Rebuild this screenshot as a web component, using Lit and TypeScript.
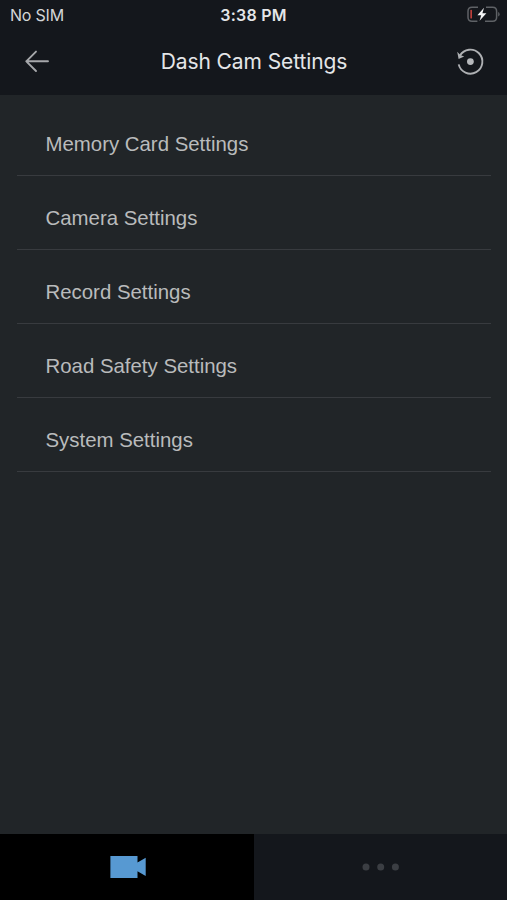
import { LitElement, html, css } from "lit";
import { customElement } from "lit/decorators.js";

interface Row {
  label: string;
}

const ROWS: Row[] = [
  { label: "Memory Card Settings" },
  { label: "Camera Settings" },
  { label: "Record Settings" },
  { label: "Road Safety Settings" },
  { label: "System Settings" },
];

@customElement("status-bar")
class StatusBar extends LitElement {
  static styles = css`
    :host {
      display: grid;
      grid-template-columns: 1fr auto 1fr;
      align-items: center;
      height: 30px;
      padding: 0 7px 0 10px;
      box-sizing: border-box;
      font-family: Inter, sans-serif;
      font-size: 16px;
      line-height: 30px;
      color: #d3d5d7;
    }
    .carrier {
      letter-spacing: -0.2px;
    }
    .time {
      font-weight: 600;
      font-size: 16px;
      letter-spacing: 0.25px;
      margin-right: 3px;
      color: #e4e6e8;
    }
    .battery {
      justify-self: end;
      display: block;
    }
  `;
  render() {
    return html`
      <span class="carrier">No SIM</span>
      <span class="time">3:38 PM</span>
      <svg class="battery" width="33" height="18" viewBox="0 0 33 18" fill="none">
        <path d="M11 1.2H5Q1 1.2 1 5.2V11.3Q1 15.3 5 15.3H10.4M19 1.2H25.6Q29.6 1.2 29.6 5.2V11.3Q29.6 15.3 25.6 15.3H18" stroke="#5f6266" stroke-width="1.5"/>
        <path d="M31.2 6Q32.6 6.6 32.6 8.2T31.2 10.6Z" fill="#5f6266"/>
        <rect x="3.4" y="3.8" width="1.5" height="8.8" rx="0.7" fill="#d0443f"/>
        <path d="M17 1.8L10.4 9.2H14.2L12.6 14.8L19.4 7.2H15.4Z" fill="#f4f5f6"/>
      </svg>
    `;
  }
}

@customElement("nav-header")
class NavHeader extends LitElement {
  static styles = css`
    :host {
      display: grid;
      grid-template-columns: 48px 1fr 48px;
      align-items: center;
      height: 65px;
      padding: 0 14px 0 16px;
      box-sizing: border-box;
    }
    .title {
      margin: 0;
      text-align: center;
      font-family: Inter, sans-serif;
      font-weight: 400;
      font-size: 21px;
      line-height: 64px;
      height: 65px;
      letter-spacing: -0.1px;
      padding-right: 1px;
      color: #e4e6e8;
    }
    .icon {
      display: block;
    }
    .reset {
      justify-self: end;
    }
  `;
  render() {
    return html`
      <svg class="icon" width="40" height="65" viewBox="0 0 40 65" fill="none" stroke="#a6a8ab" stroke-width="1.9" stroke-linecap="round" stroke-linejoin="round">
        <path d="M20 21.6L10.3 31.3L20 41M10.3 31.3H32"/>
      </svg>
      <h1 class="title">Dash Cam Settings</h1>
      <svg class="icon reset" width="40" height="65" viewBox="0 0 40 65" fill="none">
        <path d="M7 25.6A12 12 0 1 1 5.7 34.4" stroke="#aeb0b3" stroke-width="1.9"/>
        <path d="M4.2 21.8L5.6 29L11.2 26.4L7.4 25Z" fill="#aeb0b3"/>
        <circle cx="17.4" cy="31.6" r="3.4" fill="#b6b8bb"/>
      </svg>
    `;
  }
}

@customElement("settings-list")
class SettingsList extends LitElement {
  static styles = css`
    :host {
      display: block;
      flex: 1;
      padding: 7px 16px 0 17px;
    }
    .list {
      list-style: none;
      margin: 0;
      padding: 0;
    }
    .row {
      height: 74.1px;
      box-sizing: border-box;
      padding: 11px 0 0 28.5px;
      border-bottom: 1px solid #383b3f;
      display: flex;
      align-items: center;
      font-family: "Liberation Sans", Arial, sans-serif;
      font-size: 20.4px;
      line-height: 24px;
      color: #b9bbbc;
    }
  `;
  render() {
    return html`<ul class="list">
      ${ROWS.map((r) => html`<li class="row">${r.label}</li>`)}
    </ul>`;
  }
}

@customElement("tab-bar")
class TabBar extends LitElement {
  static styles = css`
    :host {
      display: grid;
      grid-template-columns: 254px 1fr;
      height: 66px;
    }
    .tab {
      display: flex;
      justify-content: center;
      align-items: center;
      background: #14171c;
    }
    .active {
      background: #000;
      padding-left: 2px;
    }
  `;
  render() {
    return html`
      <div class="tab active">
        <svg width="36" height="22" viewBox="0 0 36 22" fill="#5799d2">
          <path d="M0.4 0H27.5V6.6L35.7 1.8V20L27.5 15.2V22H0.4Z"/>
        </svg>
      </div>
      <div class="tab">
        <svg width="38" height="8" viewBox="0 0 38 8" fill="#3b3e43">
          <circle cx="4" cy="4" r="3.5"/>
          <circle cx="18.7" cy="4" r="3.5"/>
          <circle cx="33.4" cy="4" r="3.5"/>
        </svg>
      </div>
    `;
  }
}

@customElement("app-root")
class AppRoot extends LitElement {
  static styles = css`
    :host {
      display: flex;
      flex-direction: column;
      width: 507px;
      height: 900px;
      overflow: hidden;
      background: #212528;
    }
    .top {
      background: #14171c;
      height: 95px;
    }
  `;
  render() {
    return html`
      <header class="top">
        <status-bar></status-bar>
        <nav-header></nav-header>
      </header>
      <settings-list></settings-list>
      <tab-bar></tab-bar>
    `;
  }
}
